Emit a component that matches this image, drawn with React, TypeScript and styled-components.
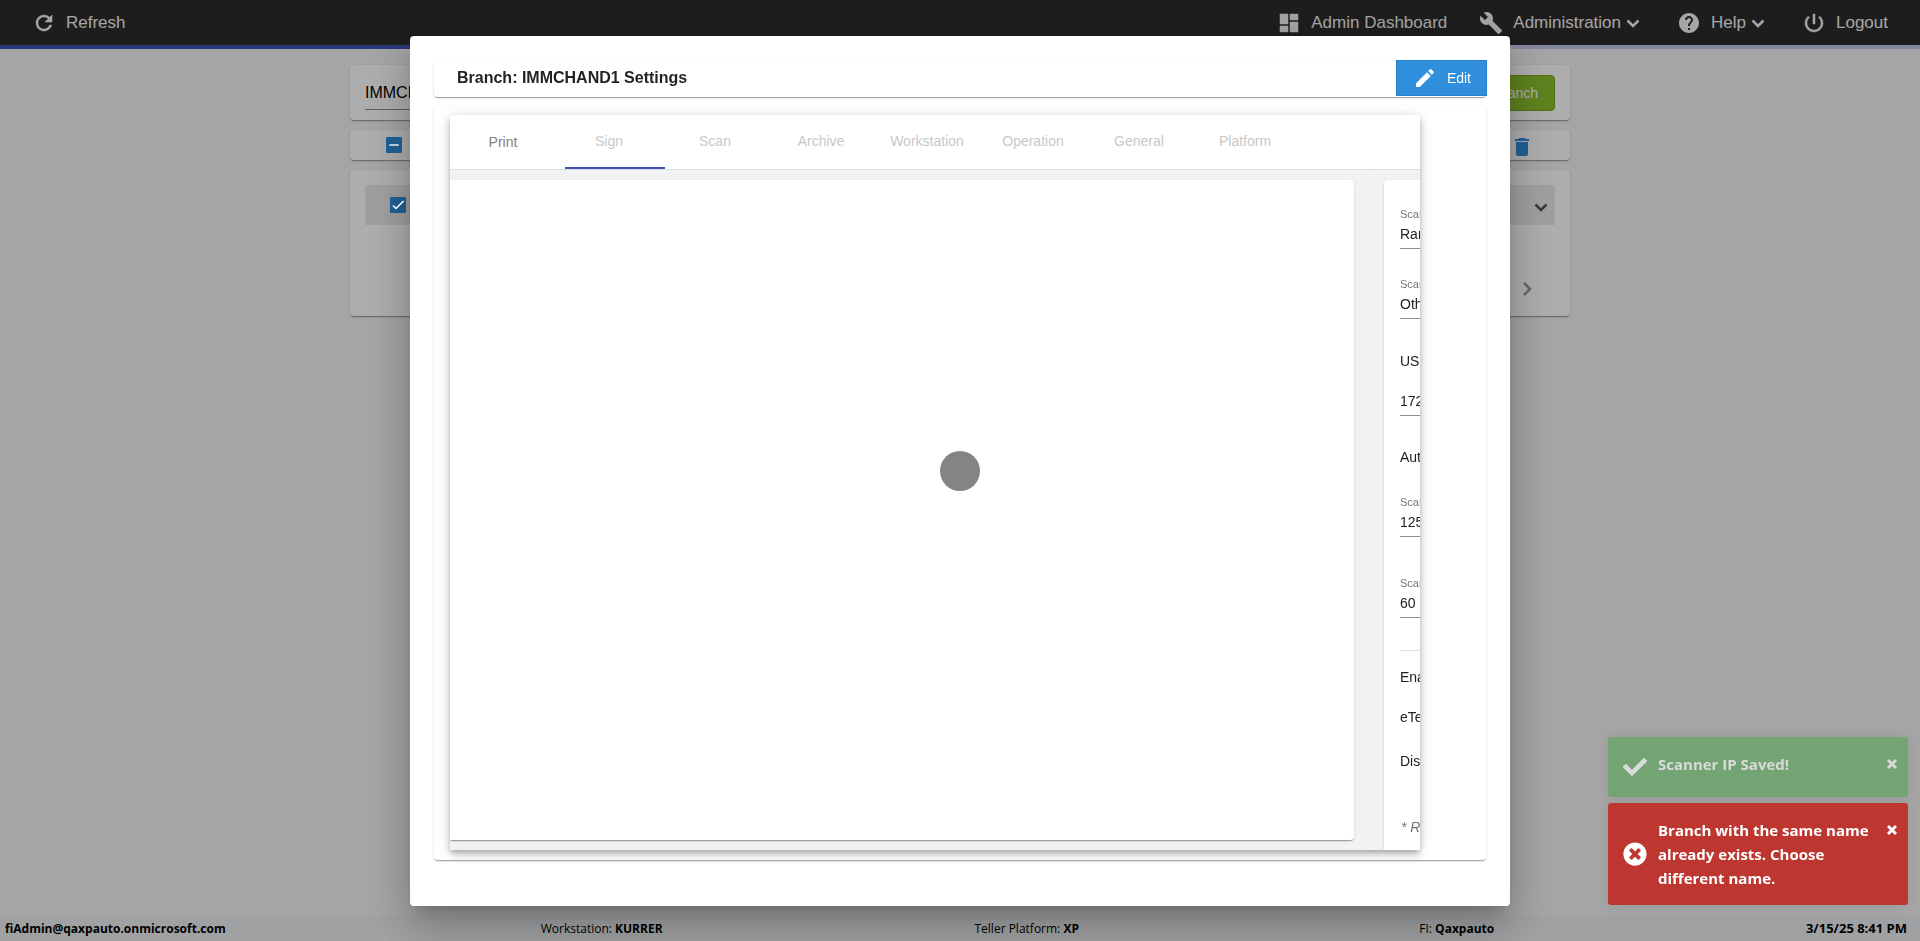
import React from "react";
import styled, { createGlobalStyle } from "styled-components";
import { MdBuild, MdDelete, MdEdit, MdHelp, MdRemove } from "react-icons/md";
import { FaCheck, FaTimesCircle } from "react-icons/fa";

const sans = `"Liberation Sans", Arial, sans-serif`;
const humanist = `"Open Sans", "Noto Sans", sans-serif`;
const cardShadow =
  "0 2px 1px -1px rgba(0,0,0,.2), 0 1px 1px rgba(0,0,0,.14), 0 1px 3px rgba(0,0,0,.12)";

const GlobalStyle = createGlobalStyle`
  *, *::before, *::after { box-sizing: border-box; }
  body { margin: 0; font-family: ${sans}; font-size: 14px; color: rgba(0,0,0,.87); background: #f3f3f3; overflow: hidden; }
  button, input { font: inherit; color: inherit; }
  button { cursor: pointer; }
`;

const Page = styled.div`
  display: flex;
  flex-direction: column;
  min-height: 100vh;
`;

const TopBar = styled.header`
  display: flex;
  justify-content: space-between;
  align-items: center;
  height: 45px;
  padding: 0 32px;
  background: #2c2c2c;
`;

const NavGroup = styled.nav`
  display: flex;
  gap: 32px;
`;

const NavButton = styled.button`
  display: flex;
  align-items: center;
  padding: 0;
  border: 0;
  background: none;
  color: #f3f3f3;
  font-size: 17px;
  line-height: 24px;
`;

const NavLabel = styled.span`
  padding-left: 10px;
`;

const Progress = styled.div`
  height: 4px;
  background: linear-gradient(to right, #3f51b5 50%, #c5cae9 50%);
`;

const Main = styled.main`
  flex: 1;
  display: flex;
  flex-direction: column;
  gap: 10px;
  width: 100%;
  max-width: 1220px;
  margin: 16px auto 0;
`;

const Card = styled.section`
  background: #fff;
  border-radius: 4px;
  box-shadow: ${cardShadow};
`;

const SearchCard = styled(Card)`
  display: flex;
  justify-content: space-between;
  align-items: center;
  height: 55px;
  padding: 0 15px;
`;

const SearchInput = styled.input`
  width: 300px;
  height: 34px;
  padding: 2px 0 0;
  border: 0;
  border-bottom: 1px solid #8a8a8a;
  background: none;
  font-size: 16px;
  color: #000;
`;

const AddButton = styled.button`
  height: 36px;
  padding: 0 16px;
  border: 1px solid #74a52a;
  border-radius: 4px;
  background: #8bc12c;
  color: #fff;
`;

const ToolCard = styled(Card)`
  display: flex;
  justify-content: space-between;
  align-items: center;
  height: 30px;
  padding: 0 36px;
`;

const IconButton = styled.button<{ $color: string }>`
  display: flex;
  padding: 4px 0 0;
  border: 0;
  background: none;
  color: ${(p) => p.$color};
`;

const ListCard = styled(Card)`
  display: flex;
  flex-direction: column;
  gap: 48px;
  height: 146px;
  padding: 15px;
`;

const BranchRow = styled.div`
  display: flex;
  justify-content: space-between;
  align-items: center;
  height: 40px;
  padding: 0 2px 0 25px;
  background: #ebebeb;
`;

const Pager = styled.div`
  display: flex;
  justify-content: flex-end;
  padding-right: 16px;
`;

const TickWrap = styled.label`
  display: grid;
  width: 16px;
  height: 16px;
  color: #fff;

  & > * {
    grid-area: 1 / 1;
    z-index: 1;
  }
`;

const TickInput = styled.input`
  appearance: none;
  width: 16px;
  height: 16px;
  margin: 0;
  border-radius: 1px;
  background: #2f8fdd;
  && {
    z-index: 0;
  }
`;

const Footer = styled.footer`
  display: grid;
  grid-template-columns: 536fr 434fr 445fr 488fr;
  align-items: center;
  height: 26px;
  padding: 0 13px 0 5px;
  background: #eceeef;
  color: #000;
  font-family: ${humanist};
  font-size: 12px;
`;

const FooterEnd = styled.div`
  display: flex;
  justify-content: space-between;
  align-items: center;
`;

const Clock = styled.b`
  font-size: 13px;
`;

const Backdrop = styled.div`
  position: fixed;
  inset: 0;
  display: flex;
  align-items: center;
  justify-content: center;
  background: rgba(0, 0, 0, 0.32);
`;

const Dialog = styled.div`
  display: flex;
  flex-direction: column;
  gap: 8px;
  width: 100%;
  max-width: 1100px;
  height: calc(100vh - 71px);
  padding: 24px 24px 46px;
  border-radius: 4px;
  background: #fff;
  box-shadow: 0 11px 15px -7px rgba(0,0,0,.2), 0 24px 38px 3px rgba(0,0,0,.14),
    0 9px 46px 8px rgba(0,0,0,.12);
`;

const TitleCard = styled(Card)`
  display: flex;
  justify-content: space-between;
  align-items: flex-start;
  height: 37px;
  padding-left: 23px;
`;

const Title = styled.h1`
  margin: 0;
  font-size: 16px;
  font-weight: 700;
  line-height: 36px;
`;

const EditButton = styled.button`
  display: flex;
  align-items: center;
  gap: 10px;
  height: 36px;
  margin-right: -1px;
  padding: 0 15px 0 16px;
  border: 1px solid #2a7fc5;
  background: #2f8fdd;
  color: #fff;
`;

const SettingsCard = styled(Card)`
  flex: 1;
  min-height: 0;
  padding: 10px 66px 10px 16px;
`;

const TabBox = styled.div`
  display: flex;
  flex-direction: column;
  height: 100%;
  overflow: hidden;
  background: #f2f2f2;
  box-shadow: 0 3px 5px -1px rgba(0,0,0,.2), 0 5px 8px rgba(0,0,0,.14),
    0 1px 14px rgba(0,0,0,.12);
`;

const TabList = styled.div`
  position: relative;
  display: flex;
  flex: none;
  height: 55px;
  background: #fff;
  border-bottom: 1px solid #dedede;
`;

const Tab = styled.button<{ $ready?: boolean }>`
  width: 106px;
  padding: ${(p) => (p.$ready ? "0" : "0 0 2px")};
  border: 0;
  background: none;
  color: ${(p) => (p.$ready ? "#808080" : "#c8c8c8")};
`;

const InkBar = styled.div`
  position: absolute;
  left: 115px;
  bottom: 0;
  width: 100px;
  height: 2px;
  background: #3f51b5;
`;

const TabBody = styled.div`
  display: flex;
  flex: 1;
  min-height: 0;
  overflow: hidden;
`;

const PrintColumn = styled.div`
  display: flex;
  flex: 1;
  min-width: 0;
  padding: 10px 15px 10px 0;
  border-right: 1px solid #f7f7f7;
`;

const PrintPane = styled(Card)`
  flex: 1;
  border-radius: 0 4px 4px 0;
`;

const ScanPane = styled(Card)`
  flex: none;
  width: 36px;
  margin: 10px 0 0 14px;
  padding: 28px 0 0 16px;
  border-radius: 4px 0 0 0;
  white-space: nowrap;
  overflow: hidden;
  color: #212121;
`;

const FieldBox = styled.label<{ $top: number }>`
  display: block;
  margin-top: ${(p) => p.$top}px;
`;

const FieldLabel = styled.span`
  display: block;
  height: 12px;
  font-size: 11px;
  line-height: 12px;
  color: #757575;
`;

const FieldInput = styled.input`
  display: block;
  width: 160px;
  height: 29px;
  padding: 0;
  border: 0;
  border-bottom: 1px solid #8f8f8f;
  background: none;
`;

const Option = styled.div<{ $top: number }>`
  margin-top: ${(p) => p.$top}px;
  line-height: 20px;
`;

const Divider = styled.hr`
  height: 1px;
  margin: 32px 0 0;
  border: 0;
  background: #e0e0e0;
`;

const Note = styled(Option)`
  padding-left: 1px;
  color: #757575;
  font-style: italic;
`;

const Spinner = styled.div`
  position: fixed;
  inset: 0;
  width: 40px;
  height: 40px;
  margin: auto;
  border-radius: 50%;
  background: #848484;
`;

const Toasts = styled.div`
  position: fixed;
  right: 12px;
  bottom: 36px;
  display: flex;
  flex-direction: column;
  gap: 6px;
  width: 300px;
`;

const Toast = styled.div<{ $bg: string; $fg: string }>`
  display: flex;
  align-items: center;
  gap: 11px;
  min-height: 60px;
  padding: 15px 11px 15px 15px;
  border-radius: 3px;
  background: ${(p) => p.$bg};
  color: ${(p) => p.$fg};
  box-shadow: 0 0 12px rgba(0, 0, 0, 0.08);
  font-family: ${humanist};
  font-size: 15px;
  font-weight: 700;
  line-height: 24px;
`;

const ToastText = styled.div`
  flex: 1;
  align-self: flex-start;
`;

const ToastClose = styled.button`
  align-self: flex-start;
  display: flex;
  padding: 6px 0 0;
  border: 0;
  background: none;
`;

const glyphs = {
  refresh:
    "M17.65 6.35C16.2 4.9 14.21 4 12 4c-4.42 0-7.99 3.58-7.99 8s3.57 8 7.99 8c3.73 0 6.84-2.55 7.73-6h-2.08c-.82 2.33-3.04 4-5.65 4-3.31 0-6-2.69-6-6s2.69-6 6-6c1.66 0 3.14.69 4.22 1.78L13 11h7V4l-2.35 2.35z",
  dashboard: "M3 13h8V3H3v10zm0 8h8v-6H3v6zm10 0h8V11h-8v10zm0-18v6h8V3h-8z",
  power:
    "M13 3h-2v10h2V3zm4.83 2.17l-1.42 1.42C17.99 7.86 19 9.81 19 12c0 3.87-3.13 7-7 7s-7-3.13-7-7c0-2.19 1.01-4.14 2.58-5.42L6.17 5.17C4.23 6.82 3 9.26 3 12c0 4.97 4.03 9 9 9s9-4.03 9-9c0-2.74-1.23-5.18-3.17-6.83z",
};

function Glyph({ name }: { name: keyof typeof glyphs }) {
  return (
    <svg width="24" height="24" viewBox="0 0 24 24" fill="currentColor" stroke="currentColor" strokeWidth="0.5">
      <path d={glyphs[name]} />
    </svg>
  );
}

function Chevron({ right }: { right?: boolean }) {
  return (
    <svg width="24" height="24" viewBox="0 0 24 24" fill="none" stroke="currentColor" strokeWidth="2.5">
      <path d={right ? "M9 6L15 12L9 18" : "M6.5 9.5L12 15L17.5 9.5"} />
    </svg>
  );
}

function CheckMark() {
  return (
    <svg width="16" height="16" viewBox="0 0 16 16" fill="none" stroke="currentColor" strokeWidth="1.5">
      <path d="M3 8.5L6 11.5L13.5 4" />
    </svg>
  );
}

function CloseIcon() {
  return (
    <svg width="10" height="12" viewBox="0 0 10 12" stroke="currentColor" strokeWidth="3">
      <path d="M1 2L9 10M9 2L1 10" />
    </svg>
  );
}

function Field(props: { label?: string; name: string; value: string; top: number }) {
  return (
    <FieldBox $top={props.top}>
      {props.label && <FieldLabel>{props.label}</FieldLabel>}
      <FieldInput aria-label={props.name} defaultValue={props.value} />
    </FieldBox>
  );
}

function Tick({ name, partial }: { name: string; partial?: boolean }) {
  return (
    <TickWrap>
      <TickInput type="checkbox" defaultChecked aria-label={name} />
      {partial ? <MdRemove size={16} /> : <CheckMark />}
    </TickWrap>
  );
}

const lockedTabs = ["Sign", "Scan", "Archive", "Workstation", "Operation", "General", "Platform"];

export default function App() {
  return (
    <>
      <GlobalStyle />
      <Page>
        <TopBar>
          <NavButton>
            <Glyph name="refresh" />
            <NavLabel>Refresh</NavLabel>
          </NavButton>
          <NavGroup>
            <NavButton>
              <Glyph name="dashboard" />
              <NavLabel>Admin Dashboard</NavLabel>
            </NavButton>
            <NavButton>
              <MdBuild size={24} />
              <NavLabel>Administration</NavLabel>
              <Chevron />
            </NavButton>
            <NavButton>
              <MdHelp size={24} />
              <NavLabel>Help</NavLabel>
              <Chevron />
            </NavButton>
            <NavButton>
              <Glyph name="power" />
              <NavLabel>Logout</NavLabel>
            </NavButton>
          </NavGroup>
        </TopBar>
        <Progress />
        <Main>
          <SearchCard>
            <SearchInput aria-label="Branch name" defaultValue="IMMCHAND1" />
            <AddButton>Add Branch</AddButton>
          </SearchCard>
          <ToolCard>
            <Tick name="Select all" partial />
            <IconButton $color="#2f8fdd" aria-label="Delete">
              <MdDelete size={24} />
            </IconButton>
          </ToolCard>
          <ListCard>
            <BranchRow>
              <Tick name="Select branch" />
              <IconButton $color="#555" aria-label="Expand">
                <Chevron />
              </IconButton>
            </BranchRow>
            <Pager>
              <IconButton $color="#999" aria-label="Next page">
                <Chevron right />
              </IconButton>
            </Pager>
          </ListCard>
        </Main>
        <Footer>
          <b>fiAdmin@qaxpauto.onmicrosoft.com</b>
          <span>
            Workstation: <b>KURRER</b>
          </span>
          <span>
            Teller Platform: <b>XP</b>
          </span>
          <FooterEnd>
            <span>
              FI: <b>Qaxpauto</b>
            </span>
            <Clock>3/15/25 8:41 PM</Clock>
          </FooterEnd>
        </Footer>
      </Page>

      <Backdrop>
        <Dialog role="dialog" aria-labelledby="dialog-title">
          <TitleCard>
            <Title id="dialog-title">Branch: IMMCHAND1 Settings</Title>
            <EditButton>
              <MdEdit size={24} />
              Edit
            </EditButton>
          </TitleCard>
          <SettingsCard>
            <TabBox>
              <TabList role="tablist">
                <Tab role="tab" $ready>
                  Print
                </Tab>
                {lockedTabs.map((name) => (
                  <Tab role="tab" key={name}>
                    {name}
                  </Tab>
                ))}
                <InkBar />
              </TabList>
              <TabBody>
                <PrintColumn>
                  <PrintPane />
                </PrintColumn>
                <ScanPane>
                  <Field top={0} label="Scanner" name="Scanner" value="Ranger" />
                  <Field top={29} label="Scanner" name="Scanner model" value="Other" />
                  <Option $top={32}>USB</Option>
                  <Field top={16} name="Scanner IP" value="172.16" />
                  <Option $top={31}>Auto</Option>
                  <Field top={29} label="Scanner" name="Scanner port" value="1250" />
                  <Field top={40} label="Scanner" name="Scanner timeout" value="60" />
                  <Divider />
                  <Option $top={16}>Enable</Option>
                  <Option $top={20}>eTeller</Option>
                  <Option $top={24}>Disable</Option>
                  <Note $top={46}>* Required</Note>
                </ScanPane>
              </TabBody>
            </TabBox>
          </SettingsCard>
        </Dialog>
        <Spinner role="progressbar" aria-label="Loading" />
      </Backdrop>

      <Toasts>
        <Toast $bg="#72a474" $fg="#dadada">
          <FaCheck size={24} />
          <ToastText>Scanner IP Saved!</ToastText>
          <ToastClose aria-label="Dismiss">
            <CloseIcon />
          </ToastClose>
        </Toast>
        <Toast $bg="#bd362f" $fg="#fff">
          <FaTimesCircle size={24} />
          <ToastText>Branch with the same name already exists. Choose different name.</ToastText>
          <ToastClose aria-label="Dismiss">
            <CloseIcon />
          </ToastClose>
        </Toast>
      </Toasts>
    </>
  );
}
